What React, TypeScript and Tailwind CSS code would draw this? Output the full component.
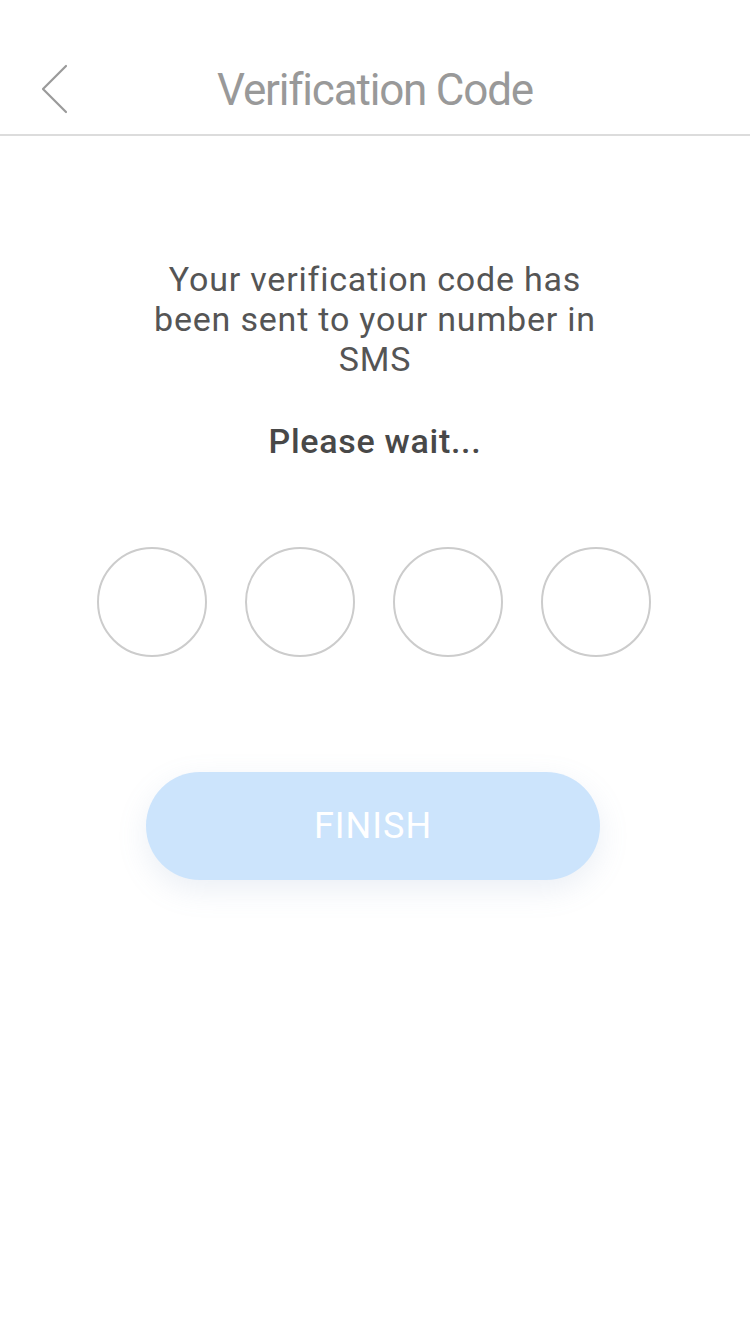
export default function App() {
  return (
    <div className="min-h-[1334px] w-[750px] bg-white font-['Roboto',sans-serif]">
      {/* Header */}
      <div className="pt-[45px] border-b-2 border-[#dcdcdc]">
        <div className="relative flex h-[89px] items-center justify-center">
          <button className="absolute left-[38px] top-[18px]">
            <svg width="32" height="52" viewBox="0 0 32 52" fill="none">
              <path
                d="M28 3 L5 26 L28 49"
                stroke="#9a9a9a"
                strokeWidth="2.2"
                strokeLinecap="round"
                strokeLinejoin="round"
              />
            </svg>
          </button>
          <h1 className="text-[44px] text-[#999999] tracking-[-1.2px]">
            Verification Code
          </h1>
        </div>
      </div>

      {/* Message */}
      <div className="mt-[123px] flex flex-col items-center">
        <p className="w-[470px] text-center text-[34px] leading-[40px] text-[#555555] tracking-[0.8px]">
          Your verification code has been sent to your number in SMS
        </p>
        <p className="mt-[42px] text-[34px] leading-[40px] font-medium text-[#484848] tracking-[0.7px]">
          Please wait...
        </p>
      </div>

      {/* Code circles */}
      <div className="mt-[86px] flex justify-center gap-[38px] pr-[2px]">
        <div className="h-[110px] w-[110px] rounded-full border-2 border-[#cccccc]" />
        <div className="h-[110px] w-[110px] rounded-full border-2 border-[#cccccc]" />
        <div className="h-[110px] w-[110px] rounded-full border-2 border-[#cccccc]" />
        <div className="h-[110px] w-[110px] rounded-full border-2 border-[#cccccc]" />
      </div>

      {/* Finish */}
      <div className="mt-[115px] flex justify-center pr-[4px]">
        <button className="h-[108px] w-[454px] rounded-full bg-[#cce4fc] text-[36px] text-white tracking-[1px] shadow-[0_10px_30px_rgba(120,150,190,0.15)]">
          FINISH
        </button>
      </div>
    </div>
  );
}
